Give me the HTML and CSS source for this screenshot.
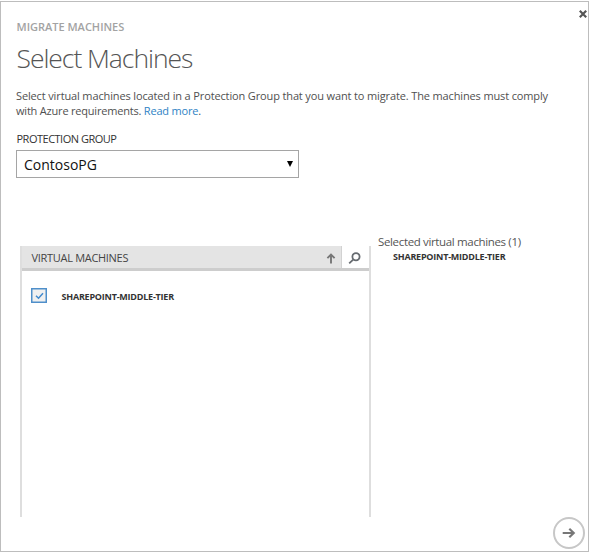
FILE: index.html
```html
<!DOCTYPE html>
<html lang="en">
<head>
<meta charset="utf-8">
<title>Select Machines</title>
<link rel="stylesheet" href="styles.css">
</head>
<body>
<main class="dialog">
  <button class="close" aria-label="Close"><svg width="8" height="8" viewBox="0 0 8 8"><path d="M.8 .8L7.2 7.2M7.2 .8L.8 7.2"/></svg></button>
  <div class="eyebrow"><span>MIGRATE MACHINES</span></div>
  <h1><span>Select Machines</span></h1>
  <p class="intro"><span class="line-a">Select virtual machines located in a Protection Group that you want to migrate. The machines must comply</span><br><span class="line-b">with Azure requirements. <a>Read more</a>.</span></p>
  <div class="label"><span>PROTECTION GROUP</span></div>
  <div class="select"><span>ContosoPG</span><svg width="6" height="6" viewBox="0 0 6 6"><path d="M0 0H6L3 6Z"/></svg></div>
  <div class="columns">
    <section class="grid">
      <header class="grid-head">
        <div class="grid-title"><span>VIRTUAL MACHINES</span><svg width="10" height="11" viewBox="0 0 10 11"><path d="M5 10.5V1.5M1.4 5.2L5 1.6L8.6 5.2"/></svg></div>
        <div class="search"><svg width="13" height="13" viewBox="0 0 13 13"><circle cx="8" cy="4.8" r="3.6"/><path d="M5.2 7.6L1.2 11.4"/></svg></div>
      </header>
      <div class="row">
        <span class="check"><svg width="9" height="8" viewBox="0 0 9 8"><path d="M1 3.8L3.5 6.2L8 1.2"/></svg></span>
        <span class="machine">SHAREPOINT-MIDDLE-TIER</span>
      </div>
    </section>
    <aside class="selected">
      <div class="selected-title"><span>Selected virtual machines (1)</span></div>
      <div class="machine">SHAREPOINT-MIDDLE-TIER</div>
    </aside>
  </div>
  <button class="next" aria-label="Next"><svg width="34" height="34" viewBox="0 0 34 34"><circle cx="17" cy="17" r="15"/><path d="M10.7 17H21.5M17.3 12.8L21.7 17L17.3 21.2"/></svg></button>
</main>
</body>
</html>
```
FILE: styles.css
```css
* { box-sizing: border-box; }
body { margin: 0; background: #fff; font-family: "Open Sans", "Noto Sans", sans-serif; color: #444; overflow: hidden; }
svg { display: block; fill: none; }
button { border: 0; padding: 0; background: none; }
.dialog { position: relative; width: 589px; height: 551px; margin-top: 1px; border: 1px solid #bdbdbd; padding: 17px 15px 0; }
.close { position: absolute; top: 8px; right: 1px; }
.close svg { stroke: #555; stroke-width: 2.2; }
.eyebrow { height: 16px; padding-left: .5px; font-size: 11px; line-height: 16px; font-weight: 600; color: #a3a3a3; }
h1 { margin: 3px 0 0; height: 41px; padding-left: .5px; font-size: 26.5px; line-height: 40px; font-weight: 300; letter-spacing: -1.05px; color: #555; }
.intro { margin: 9px 0 0; font-size: 11px; line-height: 15px; white-space: nowrap; color: #505050; }
.line-a { letter-spacing: -.135px; }
.line-b { letter-spacing: -.2px; }
.intro a { color: #2f83c5; }
.label { margin-top: 13px; height: 16px; padding-left: .5px; font-size: 11px; line-height: 16px; letter-spacing: -.5px; color: #333; }
.select { display: flex; align-items: center; justify-content: space-between; width: 283px; height: 28px; margin-top: 3px; border: 1px solid #a5a5a5; padding: 0 5px 0 7px; font-size: 14px; color: #111; }
.select svg { fill: #000; }
.columns { display: flex; margin: 56px 0 0 4px; }
.grid { width: 351px; height: 271px; margin-top: 12px; border: solid #dedede; border-width: 0 2px; }
.grid-head { display: flex; height: 25px; border-bottom: 3px solid #cdcdcd; }
.grid-title { display: flex; align-items: center; justify-content: space-between; width: 319px; background: #e4e4e4; padding: 0 5px 0 9.5px; font-size: 11px; letter-spacing: -.3px; color: #444; }
.grid-title svg { stroke: #777; stroke-width: 1.9; margin-top: 2px; }
.search { display: flex; align-items: center; justify-content: center; flex: 1; padding-top: 2px; padding-right: 2px; border-left: 1px solid #d2d2d2; }
.search svg { stroke: #666b70; stroke-width: 1.8; }
.row { display: flex; align-items: center; height: 15px; margin: 17px 0 0 9px; }
.check { display: flex; align-items: center; justify-content: center; width: 16px; height: 15px; margin-right: 14.5px; border: 1px solid #4f8fca; box-shadow: inset 0 0 0 .5px #4f8fca; background: #f0f0f0; }
.check svg { stroke: #4189cd; stroke-width: 1.5; }
.machine { font-size: 9px; line-height: 14px; font-weight: 700; letter-spacing: -.22px; color: #333; white-space: nowrap; }
.row .machine { margin-top: 3px; }
.selected { margin-left: 7px; }
.selected-title { font-size: 11.5px; line-height: 16px; letter-spacing: -.35px; color: #555; white-space: nowrap; }
.selected .machine { margin-left: 15px; }
.next { position: absolute; right: 2px; bottom: 1px; }
.next svg { stroke: #777; stroke-width: 2.2; }
.next circle { stroke: #c7c7c7; stroke-width: 2; }
```
